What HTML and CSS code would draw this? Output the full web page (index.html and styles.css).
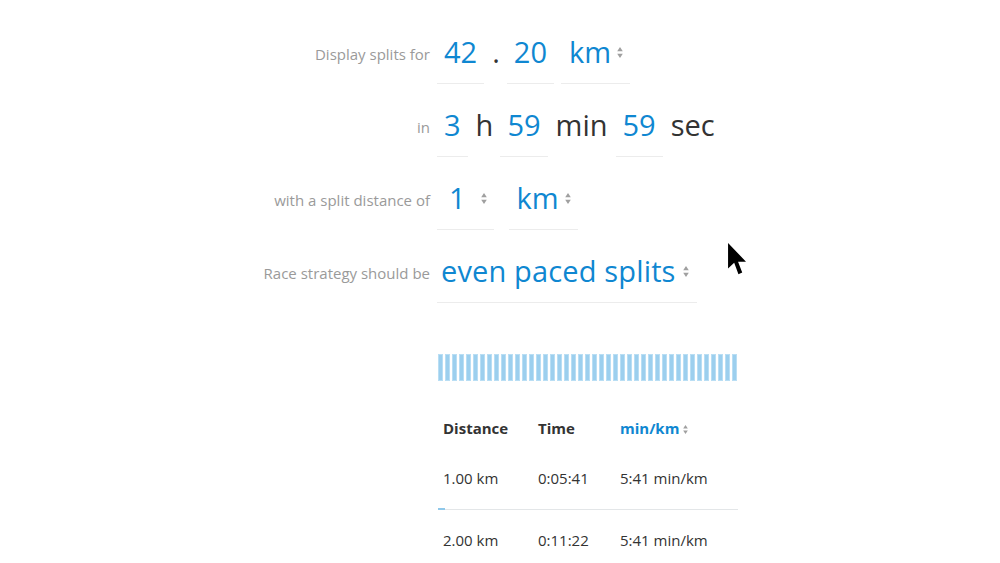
FILE: index.html
```html
<!DOCTYPE html>
<html lang="en">
<head>
<meta charset="utf-8">
<title>Race splits</title>
<link rel="stylesheet" href="styles.css">
</head>
<body>
<main class="page">
  <section class="form">
    <div class="row">
      <div class="label">Display splits for</div>
      <div class="fields">
        <span class="field">42</span><span class="unit">.</span><span class="field">20</span><span class="field select gap-s">km<svg class="spin" viewBox="0 0 6 13"><path d="M0.2 5.2L3 1L5.8 5.2Z M0.2 7.8L5.8 7.8L3 12Z"/></svg></span>
      </div>
    </div>
    <div class="row">
      <div class="label">in</div>
      <div class="fields">
        <span class="field">3</span><span class="unit">h</span><span class="field">59</span><span class="unit wide">min</span><span class="field">59</span><span class="unit">sec</span>
      </div>
    </div>
    <div class="row">
      <div class="label">with a split distance of</div>
      <div class="fields">
        <span class="field select one">1<svg class="spin" viewBox="0 0 6 13"><path d="M0.2 5.2L3 1L5.8 5.2Z M0.2 7.8L5.8 7.8L3 12Z"/></svg></span><span class="field select gap-l">km<svg class="spin" viewBox="0 0 6 13"><path d="M0.2 5.2L3 1L5.8 5.2Z M0.2 7.8L5.8 7.8L3 12Z"/></svg></span>
      </div>
    </div>
    <div class="row">
      <div class="label">Race strategy should be</div>
      <div class="fields">
        <span class="field select strategy">even paced splits<svg class="spin" viewBox="0 0 6 13"><path d="M0.2 5.2L3 1L5.8 5.2Z M0.2 7.8L5.8 7.8L3 12Z"/></svg></span>
      </div>
    </div>
  </section>

  <section class="results">
    <div class="chart">
      <i></i><i></i><i></i><i></i><i></i><i></i><i></i><i></i><i></i><i></i>
      <i></i><i></i><i></i><i></i><i></i><i></i><i></i><i></i><i></i><i></i>
      <i></i><i></i><i></i><i></i><i></i><i></i><i></i><i></i><i></i><i></i>
      <i></i><i></i><i></i><i></i><i></i><i></i><i></i><i></i><i></i><i></i>
      <i></i><i></i><i></i>
    </div>
    <table class="splits">
      <thead>
        <tr>
          <th class="c-dist">Distance</th>
          <th class="c-time">Time</th>
          <th class="c-pace active">min/km<svg class="spin small" viewBox="0 0 6 13"><path d="M0.2 5.2L3 1L5.8 5.2Z M0.2 7.8L5.8 7.8L3 12Z"/></svg></th>
        </tr>
      </thead>
      <tbody>
        <tr class="first">
          <td>1.00 km</td><td>0:05:41</td><td>5:41 min/km</td>
        </tr>
        <tr>
          <td>2.00 km</td><td>0:11:22</td><td>5:41 min/km</td>
        </tr>
      </tbody>
    </table>
  </section>

  <svg class="cursor" viewBox="0 0 20 36" aria-hidden="true"><path d="M0 0L0 27L6.5 21L11 33L15 31.2L10.6 19.8L19 19.8Z"/></svg>
</main>
</body>
</html>
```

FILE: styles.css
```css
* { box-sizing: border-box; }
html, body { margin: 0; padding: 0; background: #fff; }
body {
  width: 1000px;
  height: 563px;
  overflow: hidden;
  font-family: "Open Sans", "Noto Sans", "Liberation Sans", sans-serif;
  color: #333;
}
.page { position: relative; width: 1000px; height: 563px; }

.form { padding-top: 32px; display: flex; flex-direction: column; gap: 21px; }
.row { display: flex; align-items: flex-start; gap: 7px; }
.label {
  flex: 0 0 430px;
  text-align: right;
  font-size: 15px;
  line-height: 20px;
  padding-top: 12px;
  color: #9a9a9a;
}
.fields { display: flex; align-items: baseline; font-size: 29px; line-height: 40px; }
.field {
  display: inline-block;
  color: #0f87d1;
  padding: 0 7px 11px 7px;
  border-bottom: 1px solid #ececec;
}
.unit { color: #333; margin: 0 7px 0 8px; }
.unit.wide { margin: 0 8px; }
.select { padding-left: 8px; }
.select .spin { margin-left: 6px; }
.one { padding-left: 12px; }
.one .spin { margin-left: 15px; }
.gap-s { margin-left: 7px; }
.gap-l { margin-left: 15px; }
.strategy { padding-left: 4px; padding-right: 8px; letter-spacing: 0.15px; }
.strategy .spin { margin-left: 7px; }

.spin {
  width: 6px;
  height: 13px;
  fill: #a0a0a0;
  vertical-align: 4px;
}
.spin.small { width: 5px; height: 11px; margin-left: 4px; vertical-align: -1px; }

.results { margin-left: 438px; width: 300px; }
.chart {
  margin-top: 51px;
  height: 27px;
  display: flex;
  gap: 2px;
}
.chart i {
  display: block;
  width: 5px;
  height: 27px;
  background: #9ccfee;
  box-shadow: inset 0 0 0 1px #b9def4;
}

.splits {
  margin-top: 28px;
  width: 300px;
  border-collapse: collapse;
  font-size: 15px;
  color: #333;
}
.splits th, .splits td { padding: 0 0 0 5px; text-align: left; }
.splits th { height: 38px; font-weight: 700; }
.splits td { height: 62px; }
.c-dist { width: 95px; }
.c-time { width: 82px; }
.active { color: #0f87d1; }
.splits tr.first td { border-bottom: 1px solid #e3e6e8; }
.splits tr.first td:first-child { position: relative; }
.splits tr.first td:first-child::after {
  content: "";
  position: absolute;
  left: 0;
  bottom: -1px;
  width: 7px;
  height: 2px;
  background: #8fc8ea;
}

.cursor {
  position: absolute;
  left: 728px;
  top: 243px;
  width: 19px;
  height: 34px;
  fill: #000;
}
```
